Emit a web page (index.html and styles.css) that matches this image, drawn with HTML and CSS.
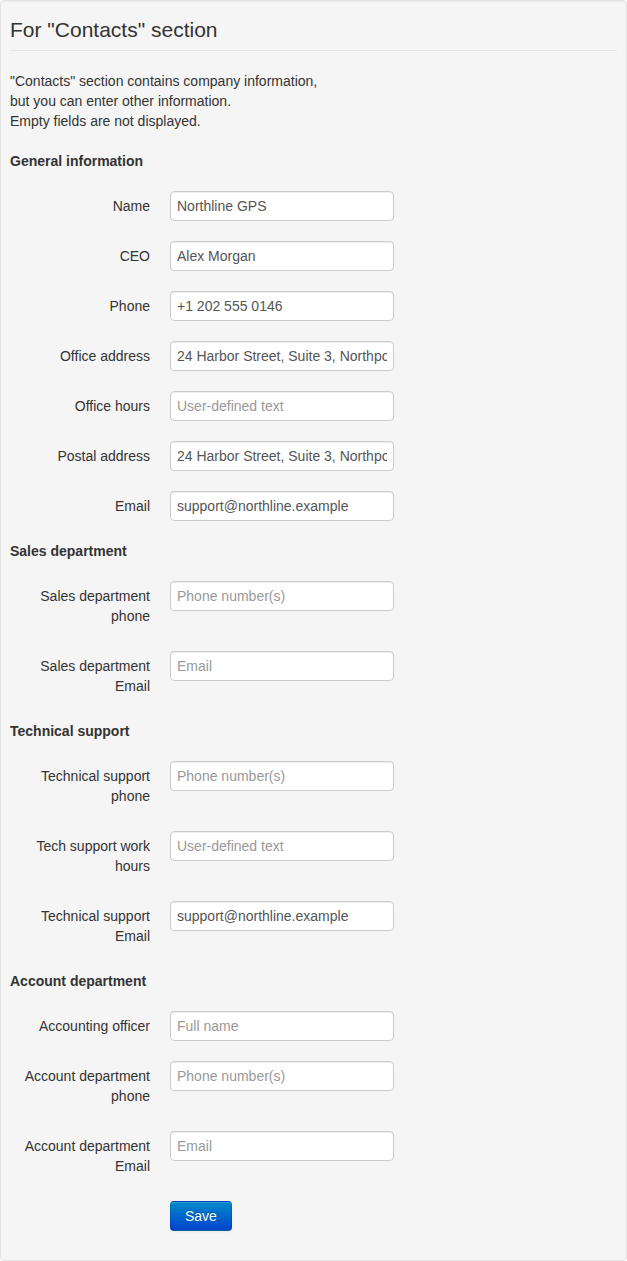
FILE: index.html
```html
<!DOCTYPE html>
<html lang="en">
<head>
    <meta charset="UTF-8">
    <meta name="viewport" content="width=device-width, initial-scale=1.0">
    <title>Contacts settings</title>
    <link rel="stylesheet" href="styles.css">
</head>
<body>
    <form class="well form-horizontal">
        <div class="legend">For "Contacts" section</div>

        <p class="intro">
            "Contacts" section contains company information,<br>
            but you can enter other information.<br>
            Empty fields are not displayed.
        </p>

        <!-- General information -->
        <h4 class="group-title">General information</h4>
        <div class="control-group">
            <label class="control-label">Name</label>
            <div class="controls"><input type="text" value="Northline GPS"></div>
        </div>
        <div class="control-group">
            <label class="control-label">CEO</label>
            <div class="controls"><input type="text" value="Alex Morgan"></div>
        </div>
        <div class="control-group">
            <label class="control-label">Phone</label>
            <div class="controls"><input type="text" value="+1 202 555 0146"></div>
        </div>
        <div class="control-group">
            <label class="control-label">Office address</label>
            <div class="controls"><input type="text" value="24 Harbor Street, Suite 3, Northport"></div>
        </div>
        <div class="control-group">
            <label class="control-label">Office hours</label>
            <div class="controls"><input type="text" placeholder="User-defined text"></div>
        </div>
        <div class="control-group">
            <label class="control-label">Postal address</label>
            <div class="controls"><input type="text" value="24 Harbor Street, Suite 3, Northport"></div>
        </div>
        <div class="control-group">
            <label class="control-label">Email</label>
            <div class="controls"><input type="text" value="support@northline.example"></div>
        </div>

        <!-- Sales department -->
        <h4 class="group-title">Sales department</h4>
        <div class="control-group">
            <label class="control-label">Sales department phone</label>
            <div class="controls"><input type="text" placeholder="Phone number(s)"></div>
        </div>
        <div class="control-group">
            <label class="control-label">Sales department Email</label>
            <div class="controls"><input type="text" placeholder="Email"></div>
        </div>

        <!-- Technical support -->
        <h4 class="group-title">Technical support</h4>
        <div class="control-group">
            <label class="control-label">Technical support phone</label>
            <div class="controls"><input type="text" placeholder="Phone number(s)"></div>
        </div>
        <div class="control-group">
            <label class="control-label">Tech support work hours</label>
            <div class="controls"><input type="text" placeholder="User-defined text"></div>
        </div>
        <div class="control-group">
            <label class="control-label">Technical support Email</label>
            <div class="controls"><input type="text" value="support@northline.example"></div>
        </div>

        <!-- Account department -->
        <h4 class="group-title">Account department</h4>
        <div class="control-group">
            <label class="control-label">Accounting officer</label>
            <div class="controls"><input type="text" placeholder="Full name"></div>
        </div>
        <div class="control-group">
            <label class="control-label">Account department phone</label>
            <div class="controls"><input type="text" placeholder="Phone number(s)"></div>
        </div>
        <div class="control-group">
            <label class="control-label">Account department Email</label>
            <div class="controls"><input type="text" placeholder="Email"></div>
        </div>

        <div class="control-group">
            <div class="controls"><button type="button" class="btn btn-primary">Save</button></div>
        </div>
    </form>
</body>
</html>
```

FILE: styles.css
```css
body {
    margin: 0;
    font-family: 'Liberation Sans', Arial, sans-serif;
    font-size: 14px;
    line-height: 20px;
    color: #333;
    background-color: #fff;
}

.well {
    margin: 0;
    padding: 9px;
    background-color: #f5f5f5;
    border: 1px solid #e3e3e3;
    border-radius: 4px;
    box-shadow: inset 0 1px 1px rgba(0, 0, 0, 0.05);
}

.legend {
    font-size: 21px;
    line-height: 40px;
    color: #333;
    border-bottom: 1px solid #e5e5e5;
    margin-bottom: 20px;
}

.intro {
    margin: 0 0 20px;
}

.group-title {
    margin: 0 0 20px;
    font-size: 14px;
    line-height: 20px;
    font-weight: bold;
}

.control-group {
    display: flex;
    margin-bottom: 20px;
}

.control-label {
    width: 140px;
    padding-top: 5px;
    margin-bottom: 5px;
    text-align: right;
    flex-shrink: 0;
}

.controls {
    margin-left: 20px;
}

.control-group > .controls:first-child {
    margin-left: 160px;
}

input {
    display: block;
    box-sizing: content-box;
    width: 210px;
    height: 20px;
    margin: 0;
    padding: 4px 6px;
    font-family: inherit;
    font-size: 14px;
    line-height: 20px;
    color: #555;
    background-color: #fff;
    border: 1px solid #ccc;
    border-radius: 4px;
    box-shadow: inset 0 1px 1px rgba(0, 0, 0, 0.075);
}

input::placeholder {
    color: #999;
}

.btn {
    display: inline-block;
    padding: 4px 14px;
    font-family: inherit;
    font-size: 14px;
    line-height: 20px;
    border-radius: 4px;
    cursor: pointer;
}

.btn-primary {
    color: #fff;
    background-color: #006dcc;
    background-image: linear-gradient(to bottom, #0088cc, #0044cc);
    border: 1px solid #0044cc;
    border-color: rgba(0, 0, 0, 0.1) rgba(0, 0, 0, 0.1) rgba(0, 0, 0, 0.25);
    text-shadow: 0 -1px 0 rgba(0, 0, 0, 0.25);
    box-shadow: inset 0 1px 0 rgba(255, 255, 255, 0.2), 0 1px 2px rgba(0, 0, 0, 0.05);
}
```
